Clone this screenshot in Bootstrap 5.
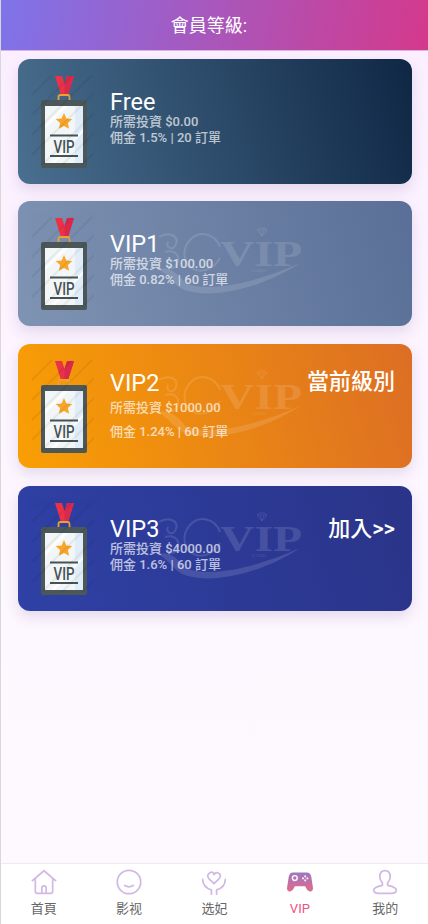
<!DOCTYPE html>
<html lang="zh-Hant">
<head>
<meta charset="utf-8">
<meta name="viewport" content="width=device-width, initial-scale=1">
<link href="https://cdn.jsdelivr.net/npm/bootstrap@5.3.0/dist/css/bootstrap.min.css" rel="stylesheet">
<style>
html,body{height:100%}
body{font-family:Roboto,"Noto Sans CJK TC",sans-serif;background:linear-gradient(180deg,#fbeeff 0,#fdf6ff 50%,#fef9ff 100%);border-left:1px solid #d8d8d8;width:428px;height:924px;overflow:hidden}
.page-wrap{height:924px}
.top-bar{height:51px;background:linear-gradient(100deg,#7e74ea 0,#d4398c 100%);border-bottom:1px solid #d9b4e2;color:#fff;font-size:18px;padding-right:11px}
.level-list{padding:8px 16px 0 17px;gap:17.9px}
.level-tile{height:124.5px;border-radius:12px;color:#fff;box-shadow:0 6px 14px rgba(90,60,130,.15);overflow:hidden;padding:0 17px 0 19px}
.lv-free{background:linear-gradient(75deg,#4a6f8f 0,#0f2745 100%)}
.lv-one{background:linear-gradient(75deg,#7f93b3 0,#5a6f97 100%)}
.lv-two{background:linear-gradient(75deg,#f99f04 0,#dc6e24 100%)}
.lv-three{background:linear-gradient(75deg,#2f41a6 0,#2a3488 100%)}
.badge-art{width:54px;height:94px;flex:none;margin-right:19px;align-self:flex-start;margin-top:16px}
.stripe-art{position:absolute;left:14px;top:16px;width:62px;height:90px;opacity:.05}
.mark-art{position:absolute;left:139px;top:26px;width:145px;height:67px;opacity:.12}
.tile-body{margin-bottom:8px}
.tile-body.wide-gap{margin-bottom:2px}
.tile-name{font-size:23.5px;line-height:25px;margin-top:1px;margin-bottom:-1px}
.tile-sub{font-size:13px;line-height:16px;color:#fff;opacity:.68;font-weight:500}
.wide-gap .tile-sub{margin-top:4.5px}
.wide-gap .tile-sub+.tile-sub{margin-top:8px}
.tile-state{font-size:22px;line-height:26px;align-self:flex-start;margin-top:25px;margin-left:auto;font-weight:500}
.tile-state.join{margin-top:30px}
.tab-bar{height:61px;background:#fff;border-top:1px solid #ececec;margin-top:auto}
.tab-cell{width:20%;color:#666;font-size:13px;line-height:16px;padding-top:5px}
.tab-cell svg{width:26px;height:26px;display:block;margin:0 auto 6px}
.tab-on{color:#f0527f}
</style>
</head>
<body>
<svg width="0" height="0" class="position-absolute">
<defs>
<linearGradient id="padGrad" x1="0" y1="0" x2="0" y2="1"><stop offset="0" stop-color="#9d77c0"/><stop offset="1" stop-color="#e06a8c"/></linearGradient>
<symbol id="idBadge" viewBox="0 0 54 94">
<path d="M18 1h7l2.500 8 2.500-8h7l-6 19h-7z" fill="#ea3346"/>
<path d="M27.500 9l2.500-8h7l-6 19h-3.500z" fill="#d9294c"/>
<path d="M21.500 25v-3q0-2 2-2h7q2 0 2 2v3" fill="none" stroke="#eaa231" stroke-width="1.800"/>
<rect x="4" y="25" width="46" height="68" rx="2" fill="#4b5759"/>
<rect x="8" y="31" width="38" height="57" fill="#f3f6f7"/>
<path d="M38 31h8v57h-8z" fill="#e0edf8"/>
<path d="M8 50L27 31h4L8 54zM14 88l32-34v3L18 88z" fill="#fdfdfd"/>
<path d="M27 38l2.400 5.400 5.900.6-4.400 4 1.200 5.800-5.100-2.900-5.100 2.900 1.200-5.800-4.400-4 5.900-.6z" fill="#f7a62b"/>
<rect x="13" y="59.500" width="28" height="2" fill="#465356"/>
<rect x="13" y="80" width="28" height="2" fill="#465356"/>
<text x="27" y="78" text-anchor="middle" font-family="Roboto,sans-serif" font-size="18" font-weight="500" fill="#465356" textLength="21" lengthAdjust="spacingAndGlyphs">VIP</text>
</symbol>
<symbol id="stripes" viewBox="0 0 62 90">
<path d="M0 20L20 0M0 40L40 0M0 60L60 0M0 80L62 18M10 90L62 38M30 90L62 58M50 90L62 78" stroke="#000" stroke-width="2" fill="none"/>
</symbol>
<symbol id="vipMark" viewBox="0 0 145 67">
<text x="63" y="39" font-family="'Liberation Serif',serif" font-size="36" font-weight="700" fill="#fff" textLength="82" lengthAdjust="spacingAndGlyphs">VIP</text>
<text x="95" y="45" font-family="'Liberation Serif',serif" font-size="5" fill="#fff">CARD</text>
<path d="M100 3l2-2h6l2 2-5 6zM100 3h10M103 3l2 6 2-6" fill="none" stroke="#fff" stroke-width=".8"/>
<path d="M63 20C58 6 42 3 33 13s-7 26 6 30c10 3 20-4 24-12" fill="none" stroke="#fff" stroke-width="2"/>
<path d="M2 10c10-6 20-1 17 7s-11 3-8-2M8 25c10-3 16 4 12 12S8 40 11 33" fill="none" stroke="#fff" stroke-width="2"/>
<path d="M0 42c12-3 22 5 28 14 24 10 70 0 115-20-36 24-84 36-112 28C16 60 14 48 0 42z" fill="#fff"/>
</symbol>
</defs>
</svg>
<div class="page-wrap d-flex flex-column">
<div class="top-bar d-flex align-items-center justify-content-center flex-shrink-0">會員等級:</div>
<div class="level-list d-flex flex-column">
  <div class="level-tile lv-free d-flex align-items-center position-relative">
    <svg class="stripe-art"><use href="#stripes"/></svg>
    <svg class="badge-art"><use href="#idBadge"/></svg>
    <div class="tile-body"><div class="tile-name">Free</div><div class="tile-sub">所需投資 $0.00</div><div class="tile-sub">佣金 1.5% | 20 訂單</div></div>
  </div>
  <div class="level-tile lv-one d-flex align-items-center position-relative">
    <svg class="stripe-art"><use href="#stripes"/></svg>
    <svg class="mark-art"><use href="#vipMark"/></svg>
    <svg class="badge-art"><use href="#idBadge"/></svg>
    <div class="tile-body"><div class="tile-name">VIP1</div><div class="tile-sub">所需投資 $100.00</div><div class="tile-sub">佣金 0.82% | 60 訂單</div></div>
  </div>
  <div class="level-tile lv-two d-flex align-items-center position-relative">
    <svg class="stripe-art"><use href="#stripes"/></svg>
    <svg class="mark-art"><use href="#vipMark"/></svg>
    <svg class="badge-art"><use href="#idBadge"/></svg>
    <div class="tile-body wide-gap"><div class="tile-name">VIP2</div><div class="tile-sub">所需投資 $1000.00</div><div class="tile-sub">佣金 1.24% | 60 訂單</div></div>
    <div class="tile-state">當前級別</div>
  </div>
  <div class="level-tile lv-three d-flex align-items-center position-relative">
    <svg class="stripe-art"><use href="#stripes"/></svg>
    <svg class="mark-art"><use href="#vipMark"/></svg>
    <svg class="badge-art"><use href="#idBadge"/></svg>
    <div class="tile-body"><div class="tile-name">VIP3</div><div class="tile-sub">所需投資 $4000.00</div><div class="tile-sub">佣金 1.6% | 60 訂單</div></div>
    <div class="tile-state join">加入&gt;&gt;</div>
  </div>
</div>
<div class="tab-bar d-flex">
  <div class="tab-cell text-center"><svg viewBox="0 0 30 30" fill="none" stroke="#d2b8e4" stroke-width="2" stroke-linejoin="round"><path d="M1 14L15 2l14 12M5 11v15q0 2 2 2h16q2 0 2-2V11M12.500 28v-6q0-2.500 2.500-2.500t2.500 2.500v6"/></svg>首頁</div>
  <div class="tab-cell text-center"><svg viewBox="0 0 30 30" fill="none" stroke="#d2b8e4" stroke-width="2" stroke-linecap="round"><circle cx="15" cy="15" r="13.500"/><path d="M10 19q5 3 10 0"/></svg>影视</div>
  <div class="tab-cell text-center"><svg viewBox="0 0 30 30" fill="none" stroke="#d2b8e4" stroke-width="2" stroke-linecap="round" stroke-linejoin="round"><path d="M15 17L9 11Q6 7 10 4.500T15 6.500Q17 3 20.500 4.800T21 11zM2 12Q2 21 12 24v5M28 12Q28 21 18 24v5"/></svg>选妃</div>
  <div class="tab-cell tab-on text-center"><svg viewBox="0 0 30 30"><path d="M7 4h16q4 0 5 5l2 13q0 4-3 4-3 0-5-4l-1-2H9l-1 2q-2 4-5 4-3 0-3-4L2 9q1-5 5-5z" fill="url(#padGrad)"/><circle cx="9" cy="10.500" r="2.800" fill="none" stroke="#fff" stroke-width="1.600"/><path d="M20 7.500h2v2h-2zM20 12h2v2h-2zM17.500 9.800h2v2h-2zM22.500 9.800h2v2h-2z" fill="#fff"/></svg>VIP</div>
  <div class="tab-cell text-center"><svg viewBox="0 0 30 30" fill="none" stroke="#d2b8e4" stroke-width="2" stroke-linejoin="round"><path d="M15 2q-6 0-6 7 0 4 3 7v3Q1 21 2 25q1 3 5 3h16q4 0 5-3 1-4-10-6v-3q3-3 3-7 0-7-6-7z"/></svg>我的</div>
</div>
</div>
<script src="https://cdn.jsdelivr.net/npm/bootstrap@5.3.0/dist/js/bootstrap.bundle.min.js"></script>
</body>
</html>
